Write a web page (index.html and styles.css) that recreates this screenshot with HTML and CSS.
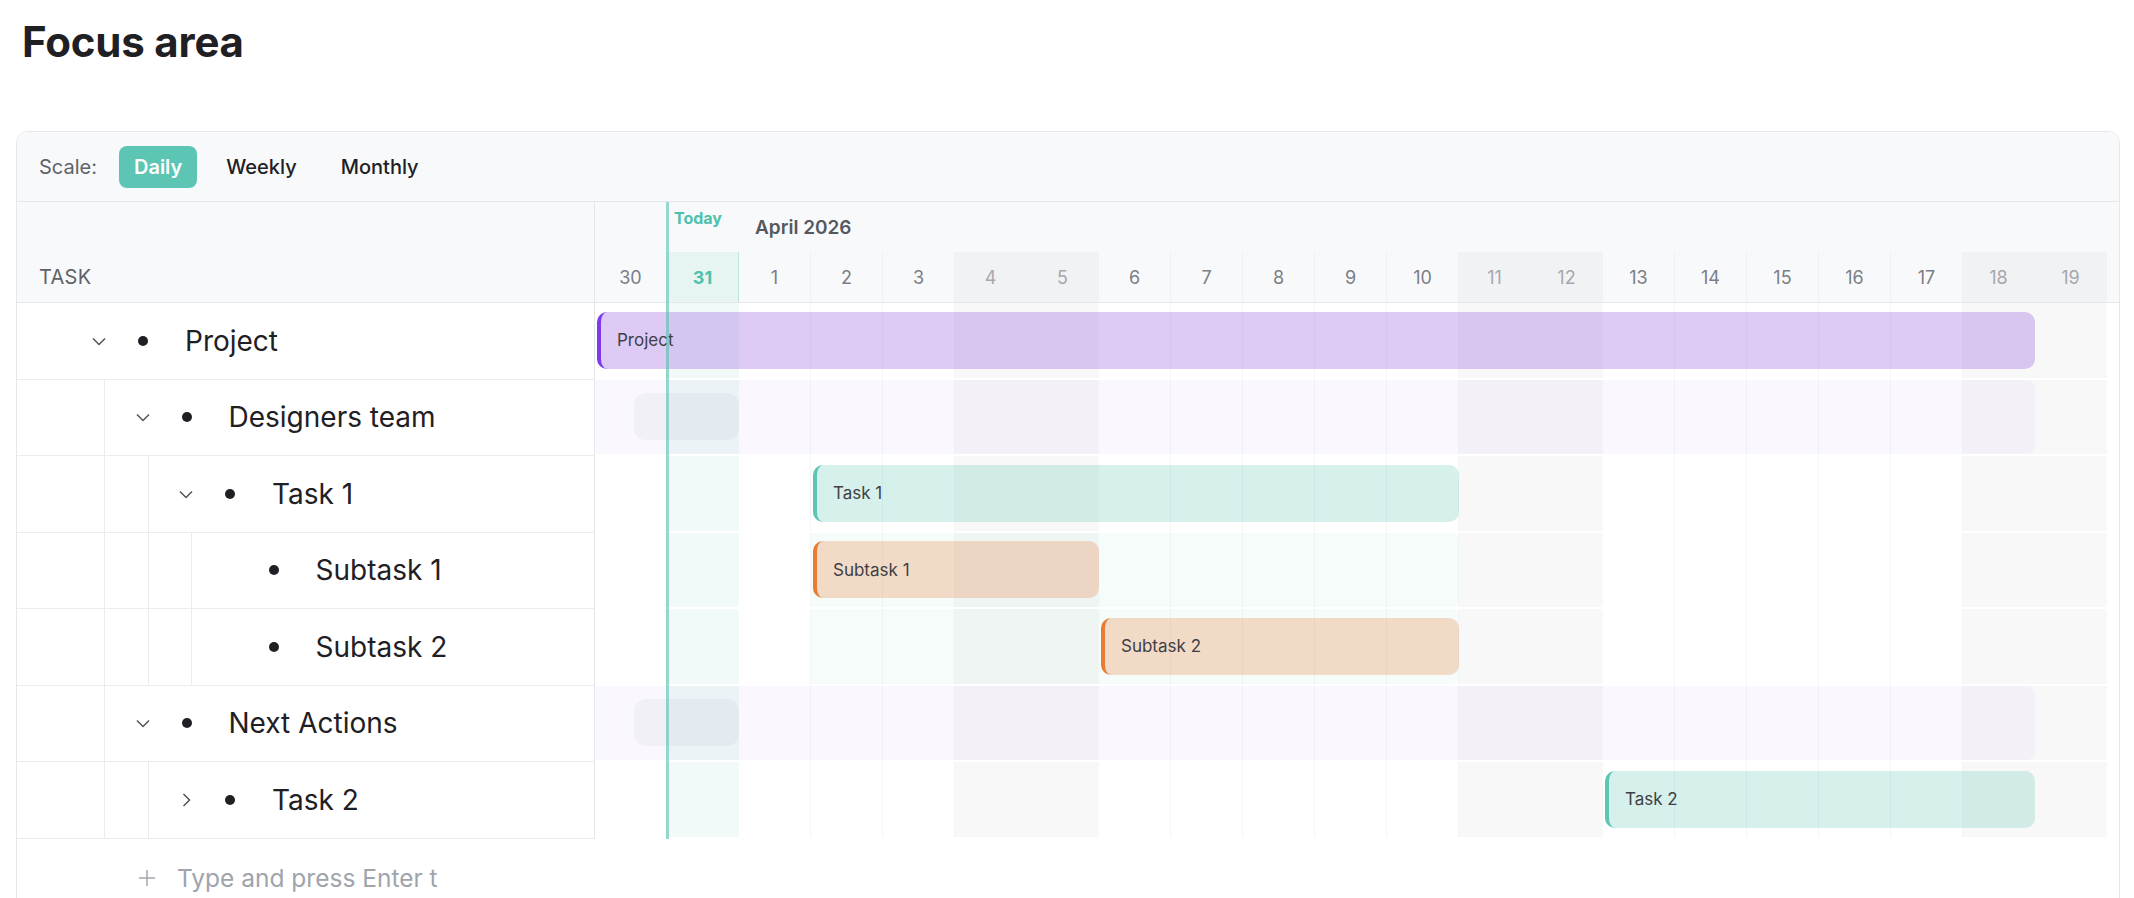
FILE: index.html
```html
<!DOCTYPE html>
<html lang="en">
<head>
    <meta charset="UTF-8">
    <meta name="viewport" content="width=device-width, initial-scale=1.0">
    <title>Focus area</title>
    <link rel="stylesheet" href="styles.css">
</head>
<body>
    <div class="page">
        <h1 class="title">Focus area</h1>
        <div class="gantt">
            <div class="toolbar">
                <span class="scale-label">Scale:</span>
                <button class="scale-btn active">Daily</button>
                <button class="scale-btn">Weekly</button>
                <button class="scale-btn">Monthly</button>
            </div>
            <div class="gantt-body">
                <div class="task-panel">
                    <div class="task-header"><span>TASK</span></div>

                    <div class="task-row">
                        <span class="toggle"><svg width="20" height="20" viewBox="0 0 20 20"><path d="M4 7.5l6 6 6-6" fill="none" stroke="#50535a" stroke-width="1.5"/></svg></span>
                        <span class="dot"></span>
                        <span class="task-name">Project</span>
                    </div>
                    <div class="task-row">
                        <span class="guide"></span>
                        <span class="toggle"><svg width="20" height="20" viewBox="0 0 20 20"><path d="M4 7.5l6 6 6-6" fill="none" stroke="#50535a" stroke-width="1.5"/></svg></span>
                        <span class="dot"></span>
                        <span class="task-name">Designers team</span>
                    </div>
                    <div class="task-row">
                        <span class="guide"></span><span class="guide"></span>
                        <span class="toggle"><svg width="20" height="20" viewBox="0 0 20 20"><path d="M4 7.5l6 6 6-6" fill="none" stroke="#50535a" stroke-width="1.5"/></svg></span>
                        <span class="dot"></span>
                        <span class="task-name">Task 1</span>
                    </div>
                    <div class="task-row">
                        <span class="guide"></span><span class="guide"></span><span class="guide"></span>
                        <span class="toggle"></span>
                        <span class="dot"></span>
                        <span class="task-name">Subtask 1</span>
                    </div>
                    <div class="task-row">
                        <span class="guide"></span><span class="guide"></span><span class="guide"></span>
                        <span class="toggle"></span>
                        <span class="dot"></span>
                        <span class="task-name">Subtask 2</span>
                    </div>
                    <div class="task-row">
                        <span class="guide"></span>
                        <span class="toggle"><svg width="20" height="20" viewBox="0 0 20 20"><path d="M4 7.5l6 6 6-6" fill="none" stroke="#50535a" stroke-width="1.5"/></svg></span>
                        <span class="dot"></span>
                        <span class="task-name">Next Actions</span>
                    </div>
                    <div class="task-row">
                        <span class="guide"></span><span class="guide"></span>
                        <span class="toggle"><svg width="20" height="20" viewBox="0 0 20 20"><path d="M7.5 4l6 6-6 6" fill="none" stroke="#50535a" stroke-width="1.5"/></svg></span>
                        <span class="dot"></span>
                        <span class="task-name">Task 2</span>
                    </div>
                </div>

                <div class="timeline">
                    <div class="tl-header">
                        <div class="month-row">
                            <span class="today-label">Today</span>
                            <span class="month-label">April 2026</span>
                        </div>
                        <div class="day-row">
                            <div class="day">30</div>
                            <div class="day today">31</div>
                            <div class="day">1</div>
                            <div class="day">2</div>
                            <div class="day">3</div>
                            <div class="day weekend">4</div>
                            <div class="day weekend">5</div>
                            <div class="day">6</div>
                            <div class="day">7</div>
                            <div class="day">8</div>
                            <div class="day">9</div>
                            <div class="day">10</div>
                            <div class="day weekend">11</div>
                            <div class="day weekend">12</div>
                            <div class="day">13</div>
                            <div class="day">14</div>
                            <div class="day">15</div>
                            <div class="day">16</div>
                            <div class="day">17</div>
                            <div class="day weekend">18</div>
                            <div class="day weekend">19</div>
                        </div>
                    </div>
                    <div class="tl-body">
                        <div class="tl-row">
                            <div class="bar bar-purple" style="grid-column: 1 / 21">Project</div>
                        </div>
                        <div class="tl-row">
                            <div class="band band-purple" style="grid-column: 1 / 21"></div>
                            <div class="placeholder" style="grid-column: 1 / 3"></div>
                        </div>
                        <div class="tl-row">
                            <div class="bar bar-teal" style="grid-column: 4 / 13">Task 1</div>
                        </div>
                        <div class="tl-row">
                            <div class="band band-teal" style="grid-column: 4 / 13"></div>
                            <div class="bar bar-orange" style="grid-column: 4 / 8">Subtask 1</div>
                        </div>
                        <div class="tl-row">
                            <div class="band band-teal" style="grid-column: 4 / 13"></div>
                            <div class="bar bar-orange" style="grid-column: 8 / 13">Subtask 2</div>
                        </div>
                        <div class="tl-row">
                            <div class="band band-purple" style="grid-column: 1 / 21"></div>
                            <div class="placeholder" style="grid-column: 1 / 3"></div>
                        </div>
                        <div class="tl-row">
                            <div class="bar bar-teal" style="grid-column: 15 / 21">Task 2</div>
                        </div>
                    </div>
                    <div class="today-line"></div>
                </div>
            </div>
            <div class="add-row">
                <svg width="20" height="20" viewBox="0 0 20 20"><path d="M10 2v16M2 10h16" fill="none" stroke="#a3a6ad" stroke-width="1.5"/></svg>
                <span class="add-text">Type and press Enter t</span>
            </div>
        </div>
    </div>
</body>
</html>
```

FILE: styles.css
```css
body {
    margin: 0;
    font-family: 'Inter', 'Noto Sans', sans-serif;
    color: #1f2024;
    background-color: #fff;
}
.page {
    padding: 16px 14px 0 16px;
}
.title {
    margin: 0 0 0 6px;
    font-size: 42px;
    font-weight: 700;
    line-height: 52px;
    letter-spacing: -0.2px;
}
.gantt {
    margin-top: 63px;
    border: 1px solid #e5e7eb;
    border-radius: 12px;
    overflow: hidden;
    background-color: #fff;
}
.toolbar {
    display: flex;
    align-items: center;
    gap: 14px;
    height: 69px;
    padding-left: 22px;
    background-color: #f8f9fa;
    border-bottom: 1px solid #e5e7eb;
}
.scale-label {
    font-size: 20px;
    color: #5f6368;
    margin-right: 8px;
}
.scale-btn {
    font-family: inherit;
    font-size: 20px;
    font-weight: 500;
    color: #1f2024;
    background: none;
    border: none;
    height: 42px;
    padding: 0 15px;
    border-radius: 8px;
}
.scale-btn.active {
    background-color: #5cc5b3;
    color: #fff;
    font-weight: 600;
}
.gantt-body {
    display: flex;
}
.task-panel {
    flex: 0 0 577px;
    border-right: 1px solid #e6e7ea;
}
.task-header {
    height: 101px;
    box-sizing: border-box;
    display: flex;
    align-items: flex-end;
    padding-left: 22px;
    background-color: #f8f9fb;
    border-bottom: 1px solid #e5e7eb;
}
.task-header span {
    line-height: 50px;
    font-size: 20px;
    color: #5f6368;
    letter-spacing: 0.3px;
}
.task-row {
    display: flex;
    align-items: center;
    height: 76.5px;
    box-sizing: border-box;
    padding-left: 44.5px;
    border-bottom: 1px solid #ececee;
}
.guide {
    flex: 0 0 43.5px;
    align-self: stretch;
    box-sizing: border-box;
    border-right: 1px solid #ececee;
}
.toggle {
    flex: 0 0 20px;
    height: 20px;
    margin-left: 27.5px;
    display: flex;
}
.dot {
    flex: 0 0 10px;
    height: 10px;
    margin-left: 29px;
    border-radius: 50%;
    background-color: #1f2024;
}
.task-name {
    margin-left: 37px;
    font-size: 28px;
    white-space: nowrap;
}
.timeline {
    flex: 1;
    position: relative;
}
.month-row,
.day-row,
.tl-row {
    display: grid;
    grid-template-columns: repeat(21, 72px);
}
.month-row {
    height: 50px;
    background-color: #f8f9fb;
}
.today-label {
    grid-column: 2;
    align-self: start;
    padding: 6px 0 0 7px;
    font-size: 16px;
    font-weight: 700;
    color: #4fc1ab;
}
.month-label {
    grid-column: 3 / span 6;
    align-self: center;
    padding-left: 16px;
    font-size: 19px;
    font-weight: 600;
    color: #55585e;
}
.day-row {
    height: 50px;
    background-color: #f8f9fb;
    border-bottom: 1px solid #e5e7eb;
}
.day {
    display: flex;
    align-items: center;
    justify-content: center;
    font-size: 18px;
    color: #7b7e85;
    border-right: 1px solid #f0f1f3;
}
.day.weekend {
    background-color: #f1f2f4;
    color: #a5a8ae;
}
.day.today {
    background-color: #e7f5f2;
    color: #4fc1ab;
    font-weight: 700;
    border-right-color: #bfe6de;
}
.tl-body {
    background:
        linear-gradient(to right,
            transparent 72px, #f1faf8 72px, #f1faf8 144px, transparent 144px,
            transparent 360px, #f8f8f8 360px, #f8f8f8 504px, transparent 504px,
            transparent 864px, #f8f8f8 864px, #f8f8f8 1008px, transparent 1008px,
            transparent 1368px, #f8f8f8 1368px, #f8f8f8 1512px, transparent 1512px) no-repeat,
        repeating-linear-gradient(to right, transparent 0, transparent 71px, #f5f5f6 71px, #f5f5f6 72px) 0 0 / 1512px 100% no-repeat;
}
.tl-row {
    height: 76.5px;
    box-sizing: border-box;
    border-bottom: 2px solid #fff;
}
.band,
.bar,
.placeholder {
    grid-row: 1;
}
.band {
    border-radius: 0 8px 8px 0;
}
.band-purple {
    background-color: rgba(124, 58, 237, 0.035);
}
.band-teal {
    background-color: rgba(91, 196, 178, 0.06);
}
.placeholder {
    align-self: center;
    height: 47px;
    margin-left: 39px;
    border-radius: 12px;
    background-color: rgba(40, 50, 80, 0.04);
}
.bar {
    align-self: center;
    height: 57px;
    margin-left: 2px;
    box-sizing: border-box;
    display: flex;
    align-items: center;
    padding-left: 16px;
    border-left: 4px solid;
    border-radius: 10px;
    font-size: 17px;
    color: #3f4045;
    white-space: nowrap;
}
.bar-purple {
    background-color: rgba(150, 90, 225, 0.32);
    border-left-color: #7c3aed;
}
.bar-teal {
    background-color: rgba(91, 196, 178, 0.25);
    border-left-color: #5cc5b3;
}
.bar-orange {
    background-color: rgba(232, 123, 53, 0.26);
    border-left-color: #e87b35;
}
.today-line {
    position: absolute;
    top: 0;
    bottom: 0;
    left: 71px;
    width: 3px;
    background-color: rgba(91, 196, 178, 0.62);
}
.add-row {
    display: flex;
    align-items: center;
    height: 78px;
    padding-left: 120px;
    padding-bottom: 40px;
}
.add-text {
    margin-left: 20px;
    font-size: 24.5px;
    color: #a0a4ab;
}
```
